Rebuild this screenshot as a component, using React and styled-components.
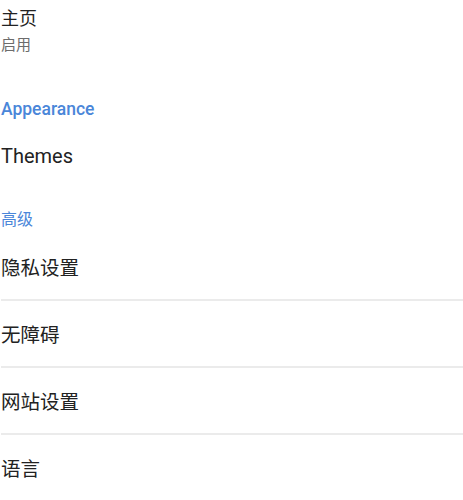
import styled, { createGlobalStyle } from "styled-components";

const GlobalStyle = createGlobalStyle`
  body {
    margin: 0;
    background: #ffffff;
    font-family: "Noto Sans CJK SC", Roboto, "Noto Sans", sans-serif;
    color: #222222;
  }
`;

const Page = styled.div`
  display: flex;
  flex-direction: column;
  padding-left: 1px;
`;

const Pref = styled.div`
  display: flex;
  flex-direction: column;
  justify-content: center;
  min-height: ${(props) => props.$height || "65px"};
  border-bottom: ${(props) => (props.$divider ? "2px solid #ebebeb" : "none")};
`;

const Title = styled.div`
  font-size: ${(props) => props.$size || "19.5px"};
  font-family: ${(props) =>
    props.$latin ? 'Roboto, "Noto Sans CJK SC", sans-serif' : "inherit"};
  line-height: 1.2;
  color: #222222;
`;

const Summary = styled.div`
  font-size: 15px;
  line-height: 1.2;
  color: #6c6c6c;
  margin-top: 6px;
`;

const Category = styled.div`
  font-size: ${(props) => props.$size || "16px"};
  font-weight: ${(props) => props.$weight || 400};
  font-family: ${(props) =>
    props.$latin ? 'Roboto, "Noto Sans CJK SC", sans-serif' : "inherit"};
  color: #4a86d9;
  line-height: 1.2;
  padding-top: ${(props) => props.$top};
  padding-bottom: ${(props) => props.$bottom};
`;

const items = ["隐私设置", "无障碍", "网站设置", "语言"];

export default function App() {
  return (
    <>
      <GlobalStyle />
      <Page>
        <Pref $height="60px">
          <Title $size="18px">主页</Title>
          <Summary>启用</Summary>
        </Pref>
        <Category $latin $weight={500} $size="17.5px" $top="39px" $bottom="0">
          Appearance
        </Category>
        <Pref $height="72px">
          <Title $latin $size="20px">
            Themes
          </Title>
        </Pref>
        <Category $top="17px" $bottom="6px">
          高级
        </Category>
        {items.map((item) => (
          <Pref key={item} $divider>
            <Title>{item}</Title>
          </Pref>
        ))}
      </Page>
    </>
  );
}
